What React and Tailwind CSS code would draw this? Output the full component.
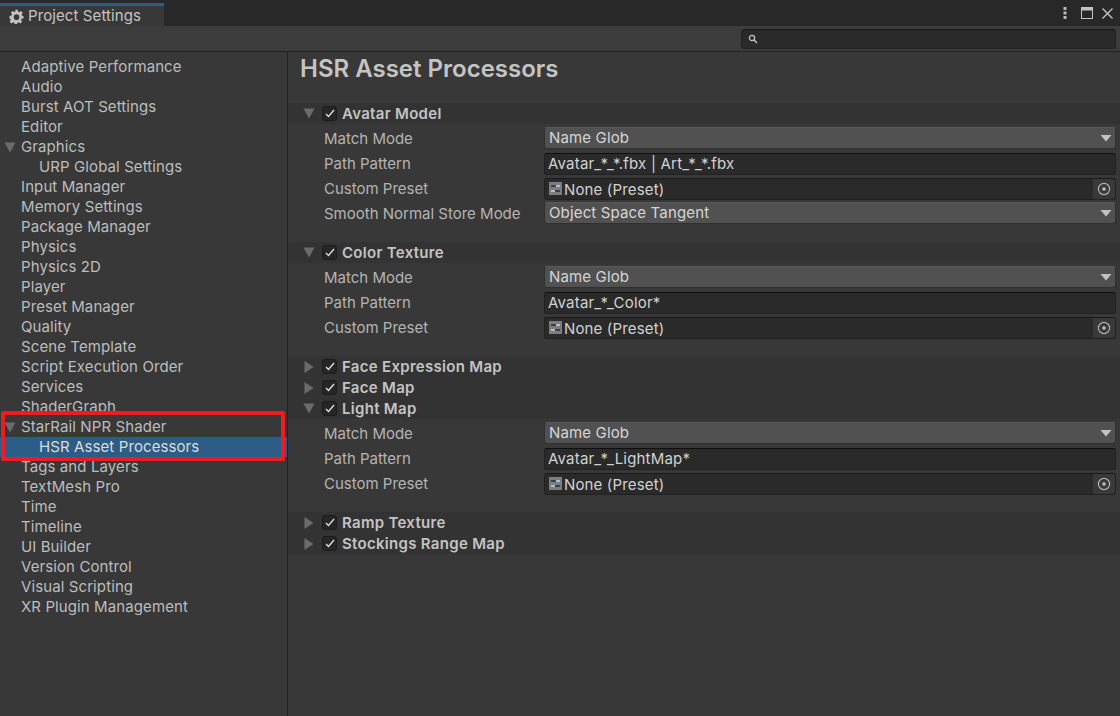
const NAV = [
  ["Adaptive Performance", 0], ["Audio", 0], ["Burst AOT Settings", 0], ["Editor", 0],
  ["Graphics", 0, true], ["URP Global Settings", 1], ["Input Manager", 0], ["Memory Settings", 0],
  ["Package Manager", 0], ["Physics", 0], ["Physics 2D", 0], ["Player", 0], ["Preset Manager", 0],
  ["Quality", 0], ["Scene Template", 0], ["Script Execution Order", 0], ["Services", 0], ["ShaderGraph", 0],
  ["StarRail NPR Shader", 0, true], ["HSR Asset Processors", 1, false, true], ["Tags and Layers", 0],
  ["TextMesh Pro", 0], ["Time", 0], ["Timeline", 0], ["UI Builder", 0], ["Version Control", 0],
  ["Visual Scripting", 0], ["XR Plugin Management", 0],
];

function Down() {
  return <svg width="12" height="11" viewBox="0 0 12 11" className="shrink-0"><path d="M0.5 0.5H11.5L6 10.5Z" fill="#6b6b6b" /></svg>;
}
function Right() {
  return <svg width="10" height="12" viewBox="0 0 10 12" className="shrink-0"><path d="M0.5 0V12L9.5 6Z" fill="#6b6b6b" /></svg>;
}
function Check() {
  return (
    <div className="w-[15px] h-[15px] rounded-[3px] bg-[#262626] border border-[#1c1c1c] flex items-center justify-center shrink-0">
      <svg width="10" height="9" viewBox="0 0 10 9"><path d="M1 5L3.5 7.5L9 1" fill="none" stroke="#e2e2e2" strokeWidth="1.3" /></svg>
    </div>
  );
}
function Header({ title, open }) {
  return (
    <div className="h-[21px] flex items-center bg-[#333333] font-semibold text-[#c4c4c4] text-[15px] tracking-[0.3px]">
      <div className="w-[34px] pl-[15px] shrink-0 flex items-center">{open ? <Down /> : <div className="pl-[1px]"><Right /></div>}</div>
      <Check />
      <span className="ml-[5px]">{title}</span>
    </div>
  );
}
function Row({ label, children }) {
  return (
    <div className="h-[25px] flex items-center pr-[4px]">
      <div className="w-[256px] pl-[36px] shrink-0 text-[#b4b4b4] tracking-normal">{label}</div>
      <div className="flex-1 min-w-0 tracking-[0.15px]">{children}</div>
    </div>
  );
}
function Select({ value }) {
  return (
    <div className="-mt-[2px] h-[22px] rounded-[3px] bg-[#515151] border border-[#303030] border-t-[#5a5a5a] flex items-center justify-between pl-[4px] pr-[3px] text-[#d6d6d6]">
      <span>{value}</span>
      <svg width="12" height="8" viewBox="0 0 12 8"><path d="M0.5 1H11.5L6 7.5Z" fill="#c2c2c2" /></svg>
    </div>
  );
}
function Input({ value }) {
  return (
    <div className="h-[22px] rounded-[3px] bg-[#2a2a2a] border border-[#212121] border-t-[#0f0f0f] flex items-center pl-[3px] text-[#d2d2d2] tracking-[0.2px]">
      {value}
    </div>
  );
}
function Preset() {
  return (
    <div className="h-[22px] rounded-[3px] bg-[#2a2a2a] border border-[#212121] border-t-[#1a1a1a] flex items-center pl-[4px] text-[#d2d2d2]">
      <svg width="13" height="13" viewBox="0 0 13 13" className="shrink-0">
        <rect width="13" height="13" fill="#7d7d7d" />
        <rect x="2" y="3" width="9" height="2" fill="#3f3f3f" />
        <rect x="2" y="8" width="9" height="2" fill="#3f3f3f" />
        <rect x="7" y="3" width="4" height="2" fill="#a9c3da" />
        <rect x="2" y="8" width="4" height="2" fill="#a9c3da" />
      </svg>
      <span className="ml-[2px] flex-1 pt-[2px]">None (Preset)</span>
      <div className="w-[22px] h-full bg-[#393939] rounded-r-[3px] flex items-center justify-center">
        <svg width="14" height="14" viewBox="0 0 14 14">
          <circle cx="7" cy="7" r="5.6" fill="none" stroke="#b0b0b0" strokeWidth="1.2" />
          <rect x="5.5" y="5.5" width="3" height="3" fill="#c8c8c8" />
        </svg>
      </div>
    </div>
  );
}
function Fields({ path, smooth }) {
  return (
    <div className="pt-[2px]">
      <Row label="Match Mode"><Select value="Name Glob" /></Row>
      <Row label="Path Pattern"><Input value={path} /></Row>
      <Row label="Custom Preset"><Preset /></Row>
      {smooth && <Row label="Smooth Normal Store Mode"><Select value="Object Space Tangent" /></Row>}
    </div>
  );
}

export default function App() {
  return (
    <div className="relative w-[1120px] h-[716px] overflow-hidden flex flex-col bg-[#383838] text-[15px] leading-[20px] tracking-[0.1px] text-[#bdbdbd]" style={{ fontFamily: "Inter, sans-serif" }}>
      <div className="h-[26px] bg-[#282828] flex items-stretch shrink-0">
        <div className="w-[164px] bg-[#383838] mt-[3px] border-t-[3px] border-[#2c5d87] flex items-center pl-[9px] text-[#c4c4c4]">
          <svg width="15" height="15" viewBox="0 0 24 24" className="shrink-0" fill="#c2c2c2">
            <path fillRule="evenodd" d="M10 1h4l.6 3.2 1.9.8 2.7-1.8 2.8 2.8-1.8 2.7.8 1.9L23.2 11v4l-3.2.6-.8 1.9 1.8 2.7-2.8 2.8-2.7-1.8-1.9.8-.6 2.2h-4l-.6-2.2-1.9-.8-2.7 1.8-2.8-2.8 1.8-2.7-.8-1.9L.8 15v-4l3.2-.6.8-1.9L3 5.8 5.8 3l2.7 1.8 1.9-.8L10 1Zm2 7.5a4.5 4.5 0 1 0 0 9 4.5 4.5 0 0 0 0-9Z" />
          </svg>
          <span className="ml-[4px]">Project Settings</span>
        </div>
        <div className="flex-1 flex items-center justify-end pr-[7px] gap-[9px]">
          <svg width="4" height="12" viewBox="0 0 4 12"><g fill="#b8b8b8"><rect x="0.5" y="0" width="3" height="3" /><rect x="0.5" y="4.5" width="3" height="3" /><rect x="0.5" y="9" width="3" height="3" /></g></svg>
          <svg width="12" height="12" viewBox="0 0 12 12" className="ml-[5px]"><rect x="0.5" y="0.5" width="11" height="11" fill="none" stroke="#c4c4c4" /><rect x="0" y="0" width="12" height="3.5" fill="#c4c4c4" /></svg>
          <svg width="11" height="11" viewBox="0 0 11 11"><path d="M0.5 0.5L10.5 10.5M10.5 0.5L0.5 10.5" stroke="#c8c8c8" strokeWidth="1.3" /></svg>
        </div>
      </div>
      <div className="h-[26px] shrink-0 bg-[#3c3c3c] border-b border-[#232323] flex items-center justify-end pr-[4px]">
        <div className="w-[375px] h-[20px] rounded-[4px] bg-[#2a2a2a] border border-[#212121] border-t-[#141414] flex items-center pl-[6px]">
          <svg width="10" height="10" viewBox="0 0 10 10"><circle cx="4" cy="4" r="2.6" fill="none" stroke="#c4c4c4" strokeWidth="1.3" /><path d="M6 6L9 9" stroke="#c4c4c4" strokeWidth="1.5" /></svg>
        </div>
      </div>
      <div className="flex-1 flex min-h-0">
        <div className="w-[288px] shrink-0 border-r border-[#232323] pt-[5px]">
          {NAV.map(([name, depth, arrow, selected]) => (
            <div key={name} className={`h-[20px] flex items-center ${selected ? "bg-[#2c5d87] text-[#dcdcdc]" : ""}`}>
              <div className={depth ? "w-[39px] shrink-0" : "w-[21px] shrink-0 pl-[4px]"}>{arrow && <Down />}</div>
              <span>{name}</span>
            </div>
          ))}
        </div>
        <div className="flex-1 min-w-0">
          <div className="h-[51px] pl-[12px] pt-[2px] text-[24px] leading-[30px] font-semibold text-[#c4c4c4] tracking-normal">HSR Asset Processors</div>
          <Header title="Avatar Model" open />
          <Fields path="Avatar_*_*.fbx | Art_*_*.fbx" smooth />
          <div className="h-[16px]" />
          <Header title="Color Texture" open />
          <Fields path="Avatar_*_Color*" />
          <div className="h-[16px]" />
          <Header title="Face Expression Map" />
          <Header title="Face Map" />
          <Header title="Light Map" open />
          <Fields path="Avatar_*_LightMap*" />
          <div className="h-[16px]" />
          <Header title="Ramp Texture" />
          <Header title="Stockings Range Map" />
        </div>
      </div>
      <div className="absolute left-[1px] top-[411px] w-[284px] h-[50px] border-[4px] border-[#ec1c24] rounded-[2px] pointer-events-none" />
    </div>
  );
}
